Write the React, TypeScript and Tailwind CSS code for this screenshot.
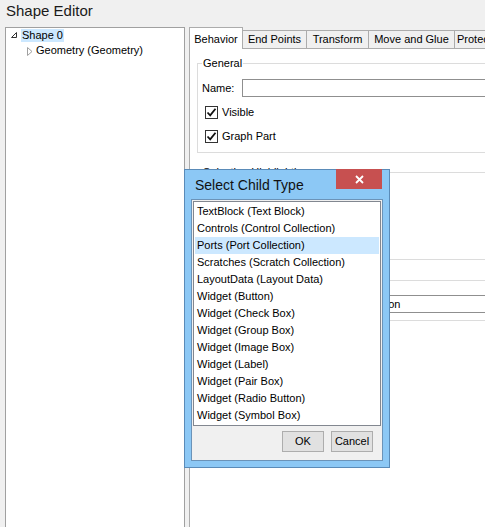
import React from "react";

function Check() {
  return (
    <div className="w-[13px] h-[13px] border border-[#333333] bg-white flex items-center justify-center flex-none">
      <svg width="11" height="11" viewBox="0 0 11 11">
        <path d="M1.5 5.5 L4.2 8.3 L9.5 1.8" fill="none" stroke="#111" strokeWidth="1.8" />
      </svg>
    </div>
  );
}

const items = [
  "TextBlock (Text Block)",
  "Controls (Control Collection)",
  "Ports (Port Collection)",
  "Scratches (Scratch Collection)",
  "LayoutData (Layout Data)",
  "Widget (Button)",
  "Widget (Check Box)",
  "Widget (Group Box)",
  "Widget (Image Box)",
  "Widget (Label)",
  "Widget (Pair Box)",
  "Widget (Radio Button)",
  "Widget (Symbol Box)",
];

export default function App() {
  return (
    <div className="relative w-[485px] h-[527px] overflow-hidden bg-[#f0f0f0] text-[11px] text-black font-['Liberation_Sans',Arial,sans-serif]">
      <div className="h-[27px] pl-[6px] pt-[1px] text-[15px] leading-[20px] text-[#1a1a1a]">Shape Editor</div>
      <div className="flex">
        <div className="ml-[5px] w-[180px] h-[520px] flex-none border border-[#a0a0a0] bg-white pt-[1px]">
          <div className="flex items-start h-[15px] pl-[5px]">
            <svg width="6" height="6" viewBox="0 0 6 6" className="mt-[3px]">
              <polygon points="5.5,0.5 5.5,5.5 0.5,5.5" fill="none" stroke="#333" strokeWidth="1" />
            </svg>
            <span className="ml-[4px] px-[1px] bg-[#cce8ff] leading-[13px]">Shape 0</span>
          </div>
          <div className="flex items-start h-[15px] pl-[21px]">
            <svg width="6" height="9" viewBox="0 0 6 9" className="mt-[3px]">
              <polygon points="0.5,0.5 5,4.5 0.5,8.5" fill="none" stroke="#a0a0a0" strokeWidth="1" />
            </svg>
            <span className="ml-[3px] leading-[13px]">Geometry (Geometry)</span>
          </div>
        </div>
        <div className="ml-[4px] w-[420px] flex-none flex flex-col">
          <div className="flex items-end h-[21px]">
            <div className="relative z-10 -mb-px h-[22px] w-[54px] bg-white border border-b-0 border-[#acacac] pt-[5px] text-center leading-[13px]">Behavior</div>
            <div className="-ml-px h-[18px] w-[65px] bg-[#f0f0f0] border border-b-0 border-[#acacac] pt-[2px] text-center leading-[13px]">End Points</div>
            <div className="-ml-px h-[18px] w-[63px] bg-[#f0f0f0] border border-b-0 border-[#acacac] pt-[2px] text-center leading-[13px]">Transform</div>
            <div className="-ml-px h-[18px] w-[87px] bg-[#f0f0f0] border border-b-0 border-[#acacac] pt-[2px] text-center leading-[13px]">Move and Glue</div>
            <div className="-ml-px h-[18px] w-[64px] bg-[#f0f0f0] border border-b-0 border-[#acacac] pt-[2px] pl-[2px] text-left leading-[13px]">Protection</div>
          </div>
          <div className="h-[480px] bg-white border-l border-t border-[#acacac] flex flex-col">
            <fieldset className="ml-[7px] mt-[8px] w-[300px] border border-[#dcdcdc] pb-[9px]">
              <legend className="ml-[4px] px-[1px] leading-[13px]">General</legend>
              <div className="mt-[9px] flex items-center h-[18px] pl-[4px]">
                <span className="w-[40px] leading-[13px]">Name:</span>
                <div className="flex-1 h-[18px] border border-[#8f8f8f] bg-white" />
              </div>
              <div className="mt-[9px] flex items-center h-[13px] pl-[7px] gap-[4px]">
                <Check />
                <span className="leading-[13px]">Visible</span>
              </div>
              <div className="mt-[11px] flex items-center h-[13px] pl-[7px] gap-[4px]">
                <Check />
                <span className="leading-[13px]">Graph Part</span>
              </div>
            </fieldset>
            <fieldset className="ml-[7px] mt-[13px] w-[300px] border border-[#dcdcdc]">
              <legend className="ml-[4px] px-[1px] leading-[13px]">Selection Highlighting</legend>
              <div className="h-[80px]" />
            </fieldset>
            <fieldset className="ml-[7px] mt-[14px] w-[300px] border border-[#dcdcdc] pb-[7px]">
              <legend className="ml-[4px] px-[1px] leading-[13px]">Highlight</legend>
              <div className="mt-[8px] flex items-center h-[18px] pl-[4px]">
                <span className="w-[40px] leading-[13px]">Style:</span>
                <div className="flex-1 h-[18px] border border-[#8f8f8f] bg-white pl-[7px] leading-[16px] whitespace-nowrap">Outlined Highlight on Selection</div>
              </div>
            </fieldset>
          </div>
        </div>
      </div>

      <div className="absolute left-[184px] top-[169px] w-[206px] h-[299px] border border-[#5a8bb8] bg-[#8cc8f5] flex flex-col">
        <div className="relative h-[29px] pl-[10px] pt-[7px] text-[14px] leading-[16px] text-[#111]">
          Select Child Type
          <div className="absolute top-[-1px] right-[7px] w-[46px] h-[20px] bg-[#c75050] flex items-center justify-center">
            <svg width="9" height="9" viewBox="0 0 9 9">
              <path d="M1 1 L8 8 M8 1 L1 8" stroke="#ffffff" strokeWidth="1.8" />
            </svg>
          </div>
        </div>
        <div className="mx-[6px] h-[262px] border border-[#6b93b8] bg-[#f0f0f0] flex flex-col">
          <div className="mt-[1px] ml-[1px] w-[188px] h-[225px] border border-[#828790] p-[1px] bg-white">
            {items.map((t, i) => (
              <div key={t} className={`h-[17px] leading-[17px] pl-[2px] whitespace-nowrap ${i === 2 ? "bg-[#cce8ff]" : ""}`}>
                {t}
              </div>
            ))}
          </div>
          <div className="mt-[5px] flex justify-end gap-[7px] pr-[9px]">
            <div className="w-[42px] h-[21px] border border-[#adadad] bg-[#e1e1e1] leading-[19px] text-center">OK</div>
            <div className="w-[42px] h-[21px] border border-[#adadad] bg-[#e1e1e1] leading-[19px] text-center">Cancel</div>
          </div>
        </div>
      </div>
    </div>
  );
}
